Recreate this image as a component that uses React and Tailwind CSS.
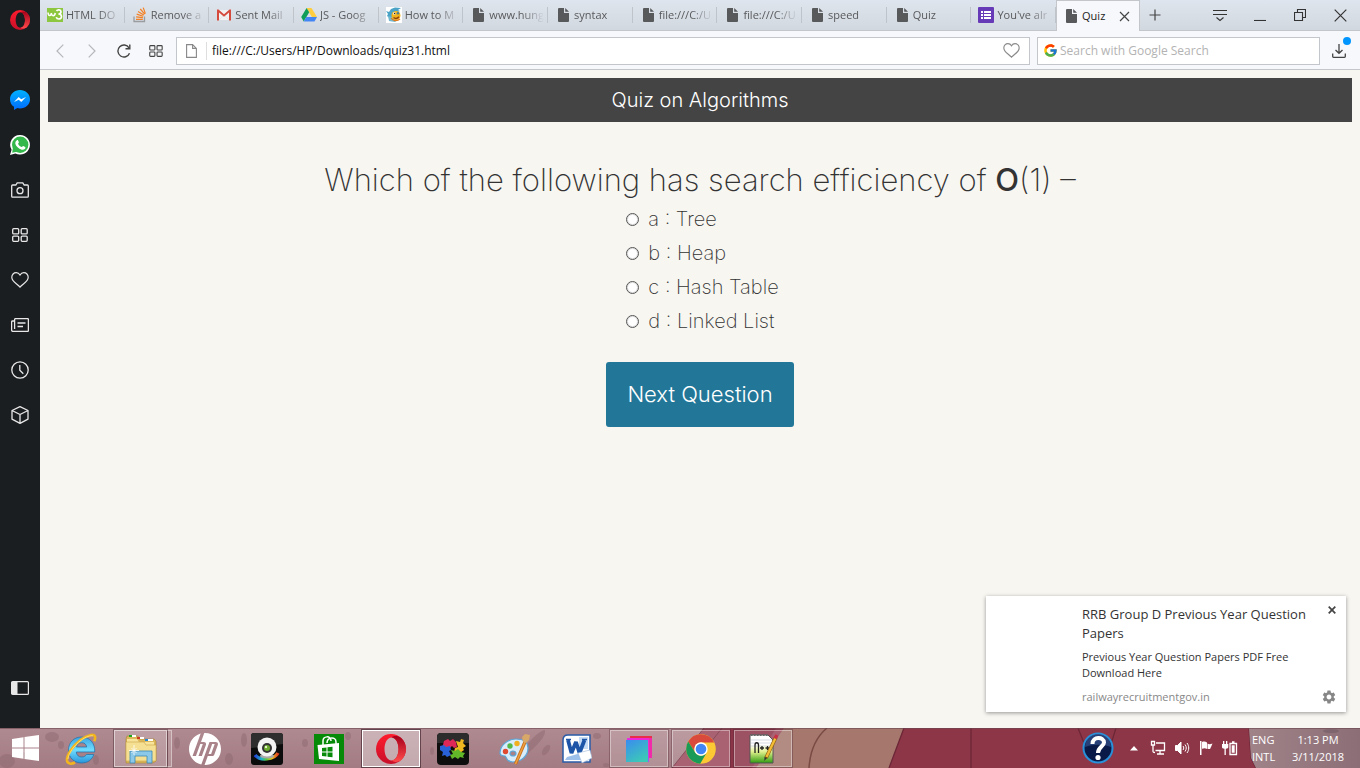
import React from "react";
import { FcGoogle } from "react-icons/fc";
import { MdSettings } from "react-icons/md";
import { SiHp } from "react-icons/si";

/* ---------- browser icons ---------- */

function OperaRing({ size, id }) {
  return (
    <svg width={size} height={size} viewBox="0 0 30 30" aria-hidden="true">
      <defs>
        <linearGradient id={id} x1="0" y1="0" x2="0" y2="1">
          <stop offset="0" stopColor="#ff1b2d" />
          <stop offset="1" stopColor="#c8102a" />
        </linearGradient>
        <linearGradient id={id + "r"} x1="0" y1="0" x2="0" y2="1">
          <stop offset="0" stopColor="#a5001a" />
          <stop offset="1" stopColor="#ff4b4b" />
        </linearGradient>
      </defs>
      <path fillRule="evenodd" fill={`url(#${id})`} d="M15 0a15 15 0 1 0 0 30a15 15 0 1 0 0-30zM15.500 3.500c4 0 7 5 7 11.500s-3 11.500-7 11.500s-7-5-7-11.500s3-11.500 7-11.500z" />
      <path fill={`url(#${id}r)`} d="M15.500 3.500c2.500-1.800 6-2 9.500 .3a15 15 0 0 1 0 22.400c-3.500 2.300-7 2.100-9.500 .3c4 0 7-5 7-11.500s-3-11.500-7-11.500z" />
    </svg>
  );
}

function DocIcon() {
  return (
    <svg width="16" height="16" viewBox="0 0 16 16" aria-hidden="true">
      <path fill="#58595b" d="M4 1h5v5h5v8a1 1 0 0 1-1 1H4a1 1 0 0 1-1-1V2a1 1 0 0 1 1-1z" />
      <path fill="#58595b" d="M10.200 1L14 4.800h-3.800z" />
    </svg>
  );
}

function W3Icon() {
  return (
    <svg width="16" height="16" viewBox="0 0 16 16" aria-hidden="true">
      <rect y="1" width="16" height="14" fill="#8dc63f" />
      <path d="M1 5.500c.2 4 3 4 3.300 .5c.3 3.500 3.300 3.500 4 0" fill="none" stroke="#fff" strokeWidth="1.500" />
      <path d="M9.500 4c1-1.800 4.500-1.500 4.500 .8c0 1.700-1.300 2.200-2.600 2.200c1.700 0 3.100 .8 3.100 2.500c0 3-4.300 3.300-5.300 .8" fill="none" stroke="#fff" strokeWidth="1.700" />
    </svg>
  );
}

function StackIcon() {
  return (
    <svg width="16" height="16" viewBox="0 0 16 16" aria-hidden="true" fill="none">
      <path d="M2 9.500V14.500H12.500V9.500" stroke="#9a9da0" strokeWidth="1.300" />
      <path d="M4 12.300H10.800M4.100 9.800l6.800 .9M4.700 7.100l6.500 2.200M6 4.400l5.800 3.700M8.300 2l4.400 5.200M11.200 .6l2.200 6" stroke="#f48024" strokeWidth="1.200" />
    </svg>
  );
}

function GmailIcon() {
  return (
    <svg width="16" height="16" viewBox="0 0 16 16" aria-hidden="true">
      <path fill="#f2f2f2" d="M2 3h12v10H2z" />
      <path fill="#d54b3d" d="M1 2.500h1.500L8 7.200l5.500-4.700H15V13.500h-2V5.600L8 9.700L3 5.600v7.900H1z" />
      <path d="M3 13l4-4M13 13L9 9" stroke="#ddd" strokeWidth=".6" />
    </svg>
  );
}

function DriveIcon() {
  return (
    <svg width="16" height="16" viewBox="0 0 16 16" aria-hidden="true">
      <path fill="#ffcd40" d="M5.600 1h4.900L16 10h-5.100z" />
      <path fill="#0f9d58" d="M5.600 1l2.600 4.200L2.700 14.500L.2 10.100z" />
      <path fill="#4285f4" d="M5.300 10H16l-2.500 4.500H2.700z" />
    </svg>
  );
}

function FishIcon() {
  return (
    <svg width="16" height="16" viewBox="0 0 16 16" aria-hidden="true">
      <rect width="16" height="16" fill="#fff" />
      <path fill="#4aa3c7" d="M5 2l4-1.500L15 1l-3 2l2 1-4 2-5 6L1 9l1-2-2-3 3 1z" />
      <path fill="#6fb8cf" d="M2 9l4 1 5 3-2 2-6-1z" />
      <circle cx="10" cy="8.500" r="4.500" fill="#f2b41c" />
      <circle cx="8.300" cy="6.500" r="1.300" fill="#fff" />
      <circle cx="8.600" cy="6.500" r=".8" fill="#222" />
      <circle cx="12" cy="6.300" r="1.200" fill="#4a7a90" />
      <path d="M7.500 10.500c2 1.500 4 1 5.500-.8" stroke="#8b3f12" strokeWidth="1.400" fill="none" />
      <path d="M5 11c2 3 6 3.500 9 1" stroke="#e0791c" strokeWidth="1.200" fill="none" />
    </svg>
  );
}

function FormsIcon() {
  return (
    <svg width="16" height="16" viewBox="0 0 16 16" aria-hidden="true">
      <rect width="16" height="16" rx="1" fill="#673ab7" />
      <path fill="#fff" d="M3 4h2v2H3zM6 4h7v2H6zM3 7h2v2H3zM6 7h7v2H6zM3 10h2v2H3zM6 10h7v2H6z" />
    </svg>
  );
}

const tabs = [
  { title: "HTML DO", icon: <W3Icon /> },
  { title: "Remove a", icon: <StackIcon /> },
  { title: "Sent Mail", icon: <GmailIcon /> },
  { title: "JS - Goog", icon: <DriveIcon /> },
  { title: "How to M", icon: <FishIcon /> },
  { title: "www.hung", icon: <DocIcon /> },
  { title: "syntax", icon: <DocIcon /> },
  { title: "file:///C:/U", icon: <DocIcon /> },
  { title: "file:///C:/U", icon: <DocIcon /> },
  { title: "speed", icon: <DocIcon /> },
  { title: "Quiz", icon: <DocIcon /> },
  { title: "You've alr", icon: <FormsIcon /> },
];

function Tab({ title, icon }) {
  return (
    <button className="flex h-[30px] min-w-0 flex-1 items-center">
      <span className="flex h-4 min-w-0 flex-1 items-center gap-[3px] border-r border-[#bfc4ca] pr-[3px] pl-[7px]">
        <span className="shrink-0">{icon}</span>
        <span className="min-w-0 flex-1 overflow-hidden text-left whitespace-nowrap text-[#58595b] [mask-image:linear-gradient(to_right,black_60%,transparent)]">
          {title}
        </span>
      </span>
    </button>
  );
}

function TabStrip() {
  return (
    <div className="flex h-[31px] items-stretch border-b border-[#c3c7cc] bg-linear-to-b from-[#dfe5ee] to-[#d2d8df] text-[11px]">
      <div className="-mb-px flex max-w-[1100px] min-w-0 flex-1">
        {tabs.map((tab, i) => (
          <Tab key={i} {...tab} />
        ))}
        <div className="flex w-[84px] shrink-0 items-center gap-[3px] border-x border-t border-[#c3c7cc] bg-[#f7f8fb] pl-[6px]">
          <DocIcon />
          <button className="flex-1 text-left text-[#222]">Quiz</button>
          <button aria-label="Close tab" className="mr-[9px]">
            <svg width="11" height="11" viewBox="0 0 11 11" stroke="#444" strokeWidth="1.200">
              <path d="M1 1l9 9M10 1l-9 9" />
            </svg>
          </button>
        </div>
      </div>
      <button aria-label="New tab" className="grid w-[29px] place-items-center">
        <svg width="12" height="12" viewBox="0 0 12 12" stroke="#444" strokeWidth="1.200">
          <path d="M6 .5v11M.5 6h11" />
        </svg>
      </button>
      <div className="ml-auto flex text-[#333]">
        <button aria-label="Tab menu" className="grid w-10 place-items-center">
          <svg width="14" height="13" viewBox="0 0 14 13" fill="none" stroke="currentColor" strokeWidth="1.100">
            <path d="M0 1.500h14M0 5.500h14M3.500 8.500L7 11.500l3.500-3" />
          </svg>
        </button>
        <button aria-label="Minimize" className="grid w-10 place-items-center">
          <svg width="12" height="12" viewBox="0 0 12 12" fill="none" stroke="currentColor" strokeWidth="1.100">
            <path d="M0 11.500h12" />
          </svg>
        </button>
        <button aria-label="Restore" className="grid w-10 place-items-center">
          <svg width="12" height="12" viewBox="0 0 12 12" fill="none" stroke="currentColor" strokeWidth="1.100">
            <path d="M.5 3.500h8v8h-8zM3.500 3.500v-3h8v8h-3" />
          </svg>
        </button>
        <button aria-label="Close window" className="grid w-10 place-items-center">
          <svg width="13" height="13" viewBox="0 0 13 13" fill="none" stroke="currentColor" strokeWidth="1.200">
            <path d="M.7 .7l11.600 11.600M12.300 .7L.7 12.300" />
          </svg>
        </button>
      </div>
    </div>
  );
}

function GridGlyph({ width, height }) {
  return (
    <svg width={width} height={height} viewBox="0 0 16 14" fill="none" stroke="currentColor" strokeWidth="1.300" aria-hidden="true">
      <rect x=".7" y=".7" width="6" height="5.200" rx="1" />
      <rect x="9.200" y=".7" width="6" height="5.200" rx="1" />
      <rect x=".7" y="8.100" width="6" height="5.200" rx="1" />
      <rect x="9.200" y="8.100" width="6" height="5.200" rx="1" />
    </svg>
  );
}

function HeartGlyph({ width, height }) {
  return (
    <svg width={width} height={height} viewBox="0 0 18 16" fill="none" stroke="currentColor" strokeWidth="1.200" aria-hidden="true">
      <path d="M9 3C8 1.300 6.700 .7 5.200 .7C2.700 .7 .8 2.600 .8 5.200c0 4.500 5.300 6.500 8.200 10c2.900-3.500 8.200-5.500 8.200-10c0-2.600-1.900-4.500-4.400-4.500C11.300 .7 10 1.300 9 3z" />
    </svg>
  );
}

function Toolbar() {
  return (
    <div className="flex h-[39px] items-center border-b border-[#c3c7cc] bg-[#f7f8fb] pt-px pr-[7px] pl-1 text-[#444]">
      <div className="flex">
        <button aria-label="Back" className="grid h-7 w-8 place-items-center text-[#b5b7ba]">
          <svg width="8" height="14" viewBox="0 0 8 14" fill="none" stroke="currentColor" strokeWidth="1.200">
            <path d="M7.300 .7L1 7l6.300 6.300" />
          </svg>
        </button>
        <button aria-label="Forward" className="grid h-7 w-8 place-items-center text-[#b5b7ba]">
          <svg width="8" height="14" viewBox="0 0 8 14" fill="none" stroke="currentColor" strokeWidth="1.200">
            <path d="M.7 .7L7 7L.7 13.300" />
          </svg>
        </button>
        <button aria-label="Reload" className="grid h-7 w-8 place-items-center">
          <svg width="14" height="14" viewBox="0 0 14 14" fill="none" stroke="currentColor" strokeWidth="1.400">
            <path d="M12.500 9.200A6 6 0 1 1 12 3.800" />
            <path d="M12.800 .5v4.300H8.500" />
          </svg>
        </button>
        <button aria-label="Speed dial" className="grid h-7 w-8 place-items-center">
          <GridGlyph width="14" height="12" />
        </button>
      </div>
      <div className="ml-1 flex h-7 min-w-0 flex-[3] items-center border border-[#c3c7cc] bg-white pr-[9px] pl-[9px]">
        <svg width="11" height="14" viewBox="0 0 11 14" fill="none" stroke="#888" strokeWidth="1.100" aria-hidden="true">
          <path d="M.6 .6h6L10.400 4.400v9H.6zM6.600 .6v3.800h3.800" />
        </svg>
        <span className="mx-[9px] h-[18px] w-px bg-[#dedede]" />
        <input aria-label="Address" defaultValue="file:///C:/Users/HP/Downloads/quiz31.html" className="-ml-1 min-w-0 flex-1 text-xs text-[#111] outline-none" />
        <button aria-label="Bookmark" className="text-[#8a8a8a]">
          <HeartGlyph width="17" height="15" />
        </button>
      </div>
      <div className="ml-[7px] flex h-7 w-[22%] max-w-[283px] items-center gap-[2px] border border-[#c3c7cc] bg-white pl-[5px]">
        <FcGoogle size={15} />
        <input aria-label="Search" placeholder="Search with Google Search" className="min-w-0 flex-1 text-xs outline-none placeholder:text-[#b3b3b3]" />
      </div>
      <button aria-label="Downloads" className="relative ml-1 grid h-7 w-[29px] place-items-center">
        <svg width="14" height="14" viewBox="0 0 14 14" fill="none" stroke="#444" strokeWidth="1.300">
          <path d="M7 0v9M3.500 6L7 9.300L10.500 6M.7 9.500v3c0 .5 .3 .8 .8 .8h11c.5 0 .8-.3 .8-.8v-3" />
        </svg>
        <span className="absolute top-0 right-[2px] size-2 rounded-full bg-[#0095ff]" />
      </button>
    </div>
  );
}

/* ---------- sidebar ---------- */

const sideItems = [
  {
    label: "Messenger",
    icon: (
      <svg width="20" height="20" viewBox="0 0 20 20">
        <defs>
          <linearGradient id="msgr" x1="0" y1="0" x2="0" y2="1">
            <stop offset="0" stopColor="#00b2ff" />
            <stop offset="1" stopColor="#006aff" />
          </linearGradient>
        </defs>
        <path fill="url(#msgr)" d="M10 0c5.600 0 10 4 10 9.200s-4.400 9.200-10 9.200c-.9 0-1.800-.1-2.600-.3L4 20v-3.200C1.500 15.200 0 12.400 0 9.200C0 4 4.400 0 10 0z" />
        <path fill="#fff" d="M4 12l4.700-5 2.500 2.300L16 6.900l-4.700 5.200-2.600-2.400z" />
      </svg>
    ),
  },
  {
    label: "WhatsApp",
    icon: (
      <svg width="20" height="20" viewBox="0 0 20 20">
        <path fill="#fff" d="M10.200 0A9.800 9.800 0 1 1 5.400 18.400L0 20l1.600-5.200A9.800 9.800 0 0 1 10.200 0z" />
        <circle cx="10.200" cy="9.800" r="8.200" fill="#35b84b" />
        <path fill="#35b84b" d="M3 12.500L2.200 17.800L8 16.500z" />
        <path fill="#fff" d="M6.900 5.200c.5-.3 1-.2 1.200 .2l.8 1.900c.1 .4-.9 1.300-.8 1.600c.9 1.600 2 2.500 3.500 3.100c.4 .1 1.200-1.300 1.600-1.100l2 1c.4 .2 .2 1.300-.2 1.900c-.7 .9-2 1.300-3.300 .9c-3.200-1-5.600-3.300-6.300-5.700c-.4-1.500 .4-3.200 1.500-3.800z" />
      </svg>
    ),
  },
  {
    label: "Snapshot",
    icon: (
      <svg width="18" height="16" viewBox="0 0 18 16" fill="none" stroke="currentColor" strokeWidth="1.300">
        <path d="M1.600 3h3.200l1.400-2.200h5.600L13.200 3h3.200c.5 0 .9 .4 .9 .9v10.400c0 .5-.4 .9-.9 .9H1.600c-.5 0-.9-.4-.9-.9V3.900c0-.5 .4-.9 .9-.9z" />
        <circle cx="9" cy="8.700" r="3" />
      </svg>
    ),
  },
  { label: "Speed Dial", icon: <GridGlyph width="16" height="14" /> },
  { label: "Bookmarks", icon: <HeartGlyph width="18" height="16" /> },
  {
    label: "News",
    icon: (
      <svg width="18" height="14" viewBox="0 0 18 14" fill="none" stroke="currentColor" strokeWidth="1.300">
        <path d="M3.600 11V1.600c0-.5 .4-1 1-1h11.800c.5 0 1 .4 1 1v10.800c0 .5-.4 1-1 1H2c-.8 0-1.400-.6-1.400-1.400V4c0-.6 .4-1 1-1h2M6.500 5h8M6.500 8.500h5.500" />
      </svg>
    ),
  },
  {
    label: "History",
    icon: (
      <svg width="18" height="18" viewBox="0 0 18 18" fill="none" stroke="currentColor" strokeWidth="1.300">
        <circle cx="9" cy="9" r="8.200" />
        <path d="M8.800 4v5.200l3.500 3.500" />
      </svg>
    ),
  },
  {
    label: "Extensions",
    icon: (
      <svg width="18" height="18" viewBox="0 0 18 18" fill="none" stroke="currentColor" strokeWidth="1.300" strokeLinejoin="round">
        <path d="M9 .7l8 3.800v8.700L9 17.300L1 13.200V4.500zM1 4.500l8 4 8-4M9 8.500v8.800" />
      </svg>
    ),
  },
];

function Sidebar() {
  return (
    <nav aria-label="Sidebar" className="flex w-10 shrink-0 flex-col items-center bg-[#1b1e20] pr-px pb-[18px] text-[#e8e8e8]">
      <button aria-label="Opera menu" className="mb-[37px] grid h-10 w-full place-items-center">
        <OperaRing size={20} id="side" />
      </button>
      {sideItems.map((item) => (
        <button key={item.label} aria-label={item.label} className="grid h-[45px] w-full place-items-center">
          {item.icon}
        </button>
      ))}
      <button aria-label="Toggle panel" className="mt-auto grid h-[45px] w-full place-items-center">
        <svg width="18" height="14" viewBox="0 0 18 14" fill="none" stroke="currentColor" strokeWidth="1.200">
          <rect x=".6" y=".6" width="16.800" height="12.800" rx="1" />
          <path d="M1 1h5.500v12H1z" fill="currentColor" stroke="none" />
        </svg>
      </button>
    </nav>
  );
}

/* ---------- quiz page ---------- */

const options = ["a : Tree", "b : Heap", "c : Hash Table", "d : Linked List"];

function Quiz() {
  return (
    <main className="relative flex-1 bg-[#f7f6f1] p-2 font-['Inter',sans-serif] text-[#333]">
      <h1 className="bg-[#444] text-center text-xl leading-[44px] font-light text-white">Quiz on Algorithms</h1>
      <form className="flex flex-col items-center pt-9" onSubmit={(e) => e.preventDefault()}>
        <h2 className="text-[31px] leading-11 font-extralight">
          Which of the following has search efficiency of <b className="font-medium">O</b>(1) –
        </h2>
        <div className="pl-[5px]">
          {options.map((option) => (
            <label key={option} className="flex h-[34px] items-center gap-[9px] text-xl font-extralight">
              <input
                type="radio"
                name="answer"
                className="size-[13px] appearance-none rounded-full border border-[#555] bg-white ring-1 ring-[#555]/20 ring-inset checked:border-4"
              />
              {option}
            </label>
          ))}
        </div>
        <button className="mt-6 h-[65px] rounded-[3px] bg-[#227799] px-[21px] text-[22px] font-light text-white">Next Question</button>
      </form>
      <Notification />
    </main>
  );
}

function Notification() {
  return (
    <aside className="absolute right-[14px] bottom-4 flex w-[360px] bg-white pt-[9px] pr-[9px] pb-[7px] pl-24 font-['Open_Sans',sans-serif] shadow-[0_1px_4px_rgba(0,0,0,0.4)]">
      <div className="min-w-0 flex-1">
        <p className="text-[13px] leading-[19px] text-[#333]">RRB Group D Previous Year Question Papers</p>
        <p className="mt-[6px] text-[11px] leading-4 text-[#333]">
          Previous Year Question Papers PDF Free
          <br />
          Download Here
        </p>
        <p className="mt-2 text-[11px] leading-4 text-[#888]">railwayrecruitmentgov.in</p>
      </div>
      <div className="flex flex-col items-end justify-between">
        <button aria-label="Dismiss" className="grid size-[10px] place-items-center">
          <svg width="8" height="8" viewBox="0 0 8 8" stroke="#444" strokeWidth="1.700">
            <path d="M.7 .7l6.600 6.600M7.300 .7L.7 7.300" />
          </svg>
        </button>
        <button aria-label="Notification settings" className="text-[#868686]">
          <MdSettings size={16} />
        </button>
      </div>
    </aside>
  );
}

/* ---------- taskbar ---------- */

function Wallpaper() {
  return (
    <svg className="absolute inset-0 h-full w-full" viewBox="0 0 1360 40" preserveAspectRatio="none" aria-hidden="true">
      <defs>
        <linearGradient id="mauve" x1="0" y1="0" x2="0" y2="1">
          <stop offset="0" stopColor="#b08a91" />
          <stop offset="1" stopColor="#a37c83" />
        </linearGradient>
        <linearGradient id="gray" x1="0" y1="0" x2="1" y2="0">
          <stop offset="0" stopColor="#a08389" />
          <stop offset="1" stopColor="#8c6f76" />
        </linearGradient>
      </defs>
      <rect width="1360" height="40" fill="url(#mauve)" />
      <g fill="#8c666e" opacity=".45">
        <ellipse cx="52" cy="9" rx="7" ry="5" />
        <ellipse cx="61" cy="17" rx="3" ry="4" />
        <ellipse cx="7" cy="33" rx="8" ry="7" />
        <ellipse cx="22" cy="27" rx="5" ry="3" />
        <ellipse cx="96" cy="32" rx="3" ry="5" />
        <ellipse cx="177" cy="15" rx="3" ry="6" />
        <ellipse cx="244" cy="12" rx="3" ry="7" />
        <ellipse cx="229" cy="31" rx="4" ry="6" />
        <ellipse cx="305" cy="15" rx="3" ry="4" />
        <ellipse cx="348" cy="8" rx="3" ry="4" />
        <ellipse cx="432" cy="23" rx="2" ry="4" />
        <path d="M523 22c8-12 18-20 22-20c1 6-6 14-20 26z" />
        <ellipse cx="546" cy="22" rx="3" ry="6" transform="rotate(35 546 22)" />
        <ellipse cx="597" cy="8" rx="4" ry="3" />
        <ellipse cx="606" cy="37" rx="3" ry="2" />
      </g>
      <path d="M704 0H900V40H672z" fill="#99475a" />
      <path d="M704 0L672 40M722 0L700 28" stroke="#763040" fill="none" />
      <path d="M730 0h46L752 40H730z" fill="#8b3447" />
      <path d="M784 0H910V40H756z" fill="#a5776d" />
      <path d="M827 0C815 10 810 24 809 40" fill="none" stroke="#794b43" strokeWidth="1.500" />
      <path d="M904 0H1249L1251 30L1256 40H889z" fill="#8d3647" />
      <path d="M904 0L889 40M971 0V40M1078 0l12 30M1116 0l-10 32M1249 0l2 30l5 10" stroke="#6c2737" strokeWidth="1.300" fill="none" />
      <path d="M1249 0H1360V40H1256L1251 30z" fill="url(#gray)" />
      <ellipse cx="1331" cy="3" rx="8" ry="2" fill="#786068" opacity=".7" />
      <path d="M0 .5H1360" stroke="#6b4750" opacity=".6" />
    </svg>
  );
}

const IeIcon = (
  <svg width="32" height="32" viewBox="0 0 32 32">
    <defs>
      <linearGradient id="ie" x1="0" y1="0" x2="0" y2="1">
        <stop offset="0" stopColor="#3da4e0" />
        <stop offset=".5" stopColor="#6fdcff" />
        <stop offset="1" stopColor="#2996dc" />
      </linearGradient>
    </defs>
    <path fill="url(#ie)" stroke="#1c6ea8" strokeWidth=".7" fillRule="evenodd" d="M16.500 4C9 4 3.500 9.500 3.500 17s5.500 13 13 13c6 0 10.500-3 12.300-8.500h-7.300c-1 1.700-2.600 2.500-4.700 2.500c-3.300 0-5.300-2-5.500-5H29.700C30.300 10.500 25 4 16.500 4zM11.500 14c.5-2.700 2.400-4.300 5.200-4.300s4.700 1.600 5 4.300z" />
    <path fill="none" stroke="#f2b51d" strokeWidth="2.600" d="M10 29.500C6 31.500 2.500 31 2 27.500C1.400 22 8 12.500 16 6.500C22 2 29 .5 30 3.500c.4 1.400 0 3-.8 4.700" />
    <path fill="none" stroke="#ffe483" strokeWidth=".8" d="M3 26C3.500 20.500 9 12.500 16 7.300C21 3.500 26 2.300 28 2.800" />
  </svg>
);

const ExplorerIcon = (
  <svg width="32" height="30" viewBox="0 0 32 30">
    <path fill="#dcb85a" stroke="#a88536" strokeWidth=".6" d="M1 5l1-3h11l1 3h15l2 2v20l-3 2H1z" />
    <path fill="#f7e39a" d="M2 5h10l2 3h15v19H2z" />
    <path fill="#fff" d="M4 1h7v2H4zM12 3h7v2h-7zM20 5h8v2h-8z" />
    <path fill="#1ca81c" d="M4 1h3v2H4z" />
    <path fill="#cf3a22" d="M12 3h3v2h-3z" />
    <path fill="#2588d8" d="M20 5h3v2h-3z" />
    <path fill="#f5df92" stroke="#caa548" strokeWidth=".6" d="M1 8h18l2 3h10v16H1z" />
    <path fill="#8cc8e8" stroke="#3b88b5" strokeWidth=".8" d="M5 17h22v12h-5v-7H10v7H5z" />
    <path stroke="#fff" strokeWidth=".8" d="M9 11v10M4 16.500h10M6.500 14l5 5M11.500 14l-5 5" />
  </svg>
);

const WebcamIcon = (
  <svg width="32" height="32" viewBox="0 0 32 32">
    <defs>
      <linearGradient id="rainbow" x1="0" x2="1">
        <stop offset="0" stopColor="#2244d8" />
        <stop offset=".3" stopColor="#22b8c8" />
        <stop offset=".5" stopColor="#5cc83c" />
        <stop offset=".75" stopColor="#f0c020" />
        <stop offset="1" stopColor="#e03a20" />
      </linearGradient>
    </defs>
    <rect width="32" height="32" rx="3" fill="#0c0c0c" />
    <path fill="#2e2e2e" d="M3 0h26a3 3 0 0 1 3 3v8L0 15V3a3 3 0 0 1 3-3z" />
    <path fill="none" stroke="url(#rainbow)" strokeWidth="3.500" d="M4 22c5 6 19 5 23-2" />
    <ellipse cx="16" cy="23" rx="7" ry="2.500" fill="#aaa" />
    <circle cx="16" cy="14" r="9.500" fill="#f3f3f3" />
    <circle cx="16" cy="15" r="5" fill="#333" />
    <circle cx="16" cy="15" r="3" fill="#6bab2e" />
    <circle cx="15" cy="14" r="1.200" fill="#e4f5c8" />
  </svg>
);

const StoreIcon = (
  <svg width="30" height="30" viewBox="0 0 30 30">
    <rect width="30" height="30" fill="#078a07" />
    <path fill="#fff" d="M3.500 11l21.500-2v18L5 25z" />
    <path fill="none" stroke="#fff" strokeWidth="1.500" d="M9 12V7c0-5 8-6 8 0M13 9c0-6 9-7 9-1v3" />
    <path fill="#078a07" d="M8 14l4.500-.5v4H8zM13.500 13.300l5-.5v4.700h-5zM8 18.500h4.500v4L8 22zM13.500 18.500h5v4.700l-5-.5z" />
  </svg>
);

const PuzzleIcon = (
  <svg width="32" height="32" viewBox="0 0 32 32">
    <rect width="32" height="32" rx="4" fill="#0e0e0e" />
    <path fill="#2c2c2c" d="M4 0h24a4 4 0 0 1 4 4v6H0V4a4 4 0 0 1 4-4z" />
    <path fill="#e02858" d="M7 8l4-2 2 2 3-2 3 3 1 5-3 1-2-2-3 3-4-2-3 1 1-3z" />
    <path fill="#f0b820" d="M19 8l4 1 1-3 3 1-1 3 3 3-3 2 1 2-4 3-3-2-3 1 1-4 3-1z" />
    <path fill="#2962d8" d="M3 13l4-1 2 2 4-1 1 4-2 1 2 4-4 2-2-2-3 1 1-4-3-2z" />
    <path fill="#63b82a" d="M14 17l4 1 3-2 3 3 4 1-2 3 1 2-4-1-2 2-3-2-3 2-2-4 3-1z" />
  </svg>
);

const PaintIcon = (
  <svg width="32" height="32" viewBox="0 0 32 32">
    <path fill="#d8ecfa" stroke="#5aa7d8" strokeWidth="1.200" d="M17 6C8 6 1 13 1 20c0 3 3 3 5 3c2 1 1 6 8 6c8 0 15-6 15-14c0-6-5-9-12-9zM14 18a3 2.500 0 1 1 0 5a3 2.500 0 1 1 0-5z" />
    <circle cx="6.500" cy="18.500" r="2.700" fill="#e04a30" />
    <circle cx="11" cy="13" r="2.700" fill="#54b848" />
    <circle cx="18" cy="10.500" r="2.700" fill="#f0b020" />
    <path stroke="#c8701c" strokeWidth="3.200" d="M16.500 31L26 9" />
    <path stroke="#f0a040" strokeWidth="1.500" d="M16.500 31L26 9" />
    <path fill="#d8a868" d="M24 9l-1-5 3-3 5 1-1 5-3 3z" />
  </svg>
);

const WordIcon = (
  <svg width="30" height="30" viewBox="0 0 30 30">
    <path fill="#fff" stroke="#2a5ca8" strokeWidth="1.500" d="M6 1h22v27H1V6c0-3 2-5 5-5z" />
    <path fill="#c6dcf5" d="M17 3h9v12h-9z" />
    <path fill="none" stroke="#1c55a8" strokeWidth="3.800" strokeLinejoin="bevel" d="M6 6l3.500 13L14 8l3.500 11L22.500 6" />
    <path stroke="#1c55a8" strokeWidth="1.500" d="M4 5.500h5M20 5.500h5" />
    <path fill="#9cc0ea" d="M5 23l14-4v7H3z" />
    <path fill="#fff" stroke="#9ab4d8" strokeWidth=".6" d="M16 19l12-3 2 8-10 5z" />
  </svg>
);

const BracketsIcon = (
  <svg width="28" height="28" viewBox="0 0 28 28">
    <defs>
      <linearGradient id="bk" x1="0" y1="0" x2=".6" y2="1">
        <stop offset="0" stopColor="#3a8cf0" />
        <stop offset="1" stopColor="#3cc8b8" />
      </linearGradient>
      <linearGradient id="bk2" x1="0" y1="0" x2="1" y2="1">
        <stop offset="0" stopColor="#e82ae0" />
        <stop offset=".6" stopColor="#f02ad0" />
        <stop offset="1" stopColor="#9a58f8" />
      </linearGradient>
    </defs>
    <path fill="#e8304a" d="M5 1h22v3H5z" />
    <path fill="#f02aa8" d="M24 3h3v20h-3z" />
    <path fill="url(#bk2)" d="M2 3h22v24H2z" />
    <rect x="1" y="5" width="22" height="22" fill="url(#bk)" />
  </svg>
);

const ChromeIcon = (
  <svg width="30" height="30" viewBox="0 0 30 30">
    <circle cx="15" cy="15" r="14.800" fill="#fcc934" />
    <path fill="#da4a3c" d="M2.200 7.500A14.800 14.800 0 0 1 28.200 8.500H15A6.700 6.700 0 0 0 9 18z" />
    <path fill="#1a9a57" d="M2.200 7.500L9.200 18.400A6.700 6.700 0 0 0 20.800 18.400L14.200 29.800A14.800 14.800 0 0 1 2.200 7.500z" />
    <circle cx="15" cy="15" r="6.700" fill="#fff" />
    <circle cx="15" cy="15" r="5.300" fill="#4285f4" />
  </svg>
);

const NotepadIcon = (
  <svg width="32" height="32" viewBox="0 0 32 32">
    <defs>
      <linearGradient id="npp" x1="0" y1="0" x2="0" y2="1">
        <stop offset=".35" stopColor="#fff" />
        <stop offset=".6" stopColor="#dff08c" />
        <stop offset="1" stopColor="#2f9c10" />
      </linearGradient>
    </defs>
    <path fill="url(#npp)" stroke="#555" d="M3 2h18l5 5v23H3z" />
    <path stroke="#666" strokeWidth="2" strokeDasharray="1.500 1.500" d="M4 2h17" />
    <path stroke="#b8c8d8" strokeWidth=".6" d="M4 7h21M4 10h21M4 13h21" />
    <path fill="none" stroke="#222" strokeWidth="1.300" d="M8 20v-8c0-3 3.500-3 3.500 0v8M13 15h4M15 13v4M18.500 15h4M20.500 13v4" />
    <path stroke="#8a5a10" strokeWidth="3.600" d="M19 25L29 4" />
    <path stroke="#f3bd35" strokeWidth="2.400" d="M19.500 24L29 4" />
    <path stroke="#c83048" strokeWidth="3.500" d="M28 5.500L30 2" />
    <path fill="#333" d="M17.500 24l2.500 1-2.700 3z" />
  </svg>
);

const apps = [
  { label: "Internet Explorer", icon: IeIcon },
  { label: "File Explorer", icon: ExplorerIcon, state: "stack" },
  { label: "HP", icon: <span className="grid size-8 place-items-center text-white"><SiHp size={32} /></span> },
  { label: "CyberLink YouCam", icon: WebcamIcon },
  { label: "Store", icon: StoreIcon },
  { label: "Opera", icon: <OperaRing size={30} id="task" />, state: "active" },
  { label: "Puzzle", icon: PuzzleIcon },
  { label: "Paint", icon: PaintIcon },
  { label: "Word", icon: WordIcon },
  { label: "Brackets", icon: BracketsIcon, state: "open" },
  { label: "Chrome", icon: ChromeIcon, state: "open" },
  { label: "Notepad++", icon: NotepadIcon, state: "open" },
];

const appStates = {
  idle: "border-transparent",
  open: "border-white/40 bg-white/15 shadow-[0_0_0_1px_rgba(80,40,50,0.35)]",
  stack: "border-white/50 bg-white/20 shadow-[0_0_0_1px_rgba(80,50,58,0.5)]",
  active: "border-white bg-white/35 shadow-[0_0_0_1px_rgba(70,40,48,0.7)]",
};

function Taskbar() {
  return (
    <footer className="relative flex h-10 shrink-0 overflow-hidden text-white">
      <Wallpaper />
      <div className="relative flex min-w-0 flex-1 items-center">
        <button aria-label="Start" className="grid h-10 w-[52px] shrink-0 place-items-center pr-[2px]">
          <svg width="27" height="26" viewBox="0 0 27 26" fill="#fff">
            <path d="M0 4l11.500-1.700v10.200H0zM12.500 2.100L27 0v12.500H12.500zM0 13.500h11.500v10.200L0 22zM12.500 13.500H27V26l-14.500-2.100z" />
          </svg>
        </button>
        <div className="flex gap-1">
          {apps.map((app) => (
            <span key={app.label} className="flex h-10 w-[58px] items-center pt-[2px] pb-px">
              <button aria-label={app.label} className={`grid h-[37px] min-w-0 flex-1 place-items-center border ${appStates[app.state || "idle"]}`}>
                {app.icon}
              </button>
              {app.state === "stack" && <span className="h-[37px] w-[5px] border border-l-[#5a3038]/60 border-y-white/40 border-r-white/40 bg-white/15" />}
            </span>
          ))}
        </div>
      </div>
      <div className="relative flex items-center font-['Open_Sans',sans-serif] text-[11px] leading-[17px]">
        <button aria-label="Help" className="mr-4">
          <svg width="32" height="32" viewBox="0 0 32 32">
            <circle cx="16" cy="16" r="14.500" fill="#0a1a48" stroke="#2a90d8" strokeWidth="2" />
            <path fill="#33518c" opacity=".7" d="M3 15a13 13 0 0 1 26 0c-8-3-18-3-26 0z" />
            <path fill="none" stroke="#fff" strokeWidth="4" d="M10.500 12c0-8 11.500-7.500 11.500-1.500c0 4-6 4.500-6 10.500" />
            <circle cx="16" cy="25.500" r="2.600" fill="#fff" />
          </svg>
        </button>
        <button aria-label="Show hidden icons" className="mr-3">
          <svg width="8" height="5" viewBox="0 0 8 5" fill="#fff">
            <path d="M4 0l4 4.500H0z" />
          </svg>
        </button>
        <div className="flex items-center gap-2 pr-[14px]">
          <button aria-label="Network">
            <svg width="16" height="16" viewBox="0 0 16 16" fill="none" stroke="#fff" strokeWidth="1.300">
              <path d="M6 3h8.500v7.500H5.500M10 10.500v3M7 14h7M1.500 1.500h3v3.500h-3zM3 5v6.500c0 1 .5 1 2 1" />
            </svg>
          </button>
          <button aria-label="Volume">
            <svg width="16" height="16" viewBox="0 0 16 16" fill="none" stroke="#fff" strokeWidth="1">
              <path fill="#fff" d="M1.500 5.500h2L7 2v12l-3.500-3.500h-2z" />
              <path d="M9 6c1 1.300 1 2.700 0 4M11 4.500c1.700 2.300 1.700 4.700 0 7M13 3c2.300 3.200 2.300 6.800 0 10" />
            </svg>
          </button>
          <button aria-label="Action Center">
            <svg width="16" height="16" viewBox="0 0 16 16" fill="#fff">
              <path d="M2 1h1.500v14H2zM4 2c2-.8 3.500-.5 5 .5V9C7.500 8 6 8 4 8.800zM9.500 3.500c1.500 1 3 .8 5 0L13 7l-1 2c-1 .2-1.700 .1-2.500-.3z" />
            </svg>
          </button>
          <button aria-label="Battery">
            <svg width="16" height="16" viewBox="0 0 16 16" fill="none" stroke="#fff" strokeWidth="1.300">
              <path d="M8 3.500h6.500v11H8zM10 2h2.500" />
              <path fill="#fff" stroke="none" d="M9.700 5.300h3v7.500h-3zM1 1h1.300v3H1zM4 1h1.300v3H4zM0 4h6.300v3c0 1-.7 1.500-2.500 1.800V15H2.500V8.800C.7 8.500 0 8 0 7z" />
            </svg>
          </button>
        </div>
        <button className="w-7 text-left">
          ENG
          <br />
          INTL
        </button>
        <button className="mr-1 w-[76px] text-center">
          <time dateTime="2018-03-11T13:13">
            1:13 PM
            <br />
            3/11/2018
          </time>
        </button>
      </div>
    </footer>
  );
}

export default function App() {
  return (
    <div className="flex min-h-screen flex-col font-['Open_Sans','Noto_Sans',sans-serif]">
      <div className="flex flex-1">
        <Sidebar />
        <div className="flex min-w-0 flex-1 flex-col">
          <TabStrip />
          <Toolbar />
          <Quiz />
        </div>
      </div>
      <Taskbar />
    </div>
  );
}
